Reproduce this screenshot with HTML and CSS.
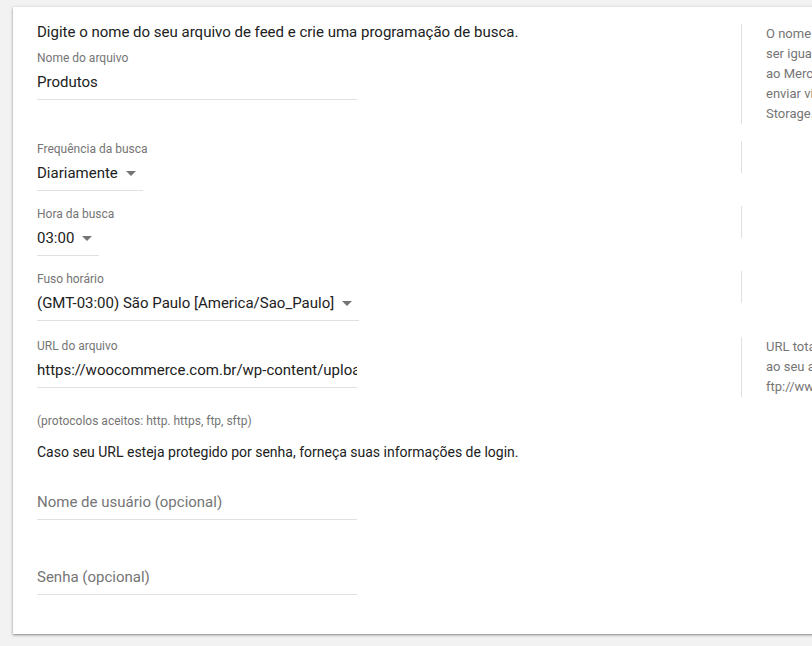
FILE: index.html
```html
<!DOCTYPE html>
<html lang="pt-BR">
<head>
<meta charset="utf-8">
<title>Feed</title>
<link rel="stylesheet" href="styles.css">
</head>
<body>
<div class="card">
  <div class="row">
    <div class="main">
      <p class="heading">Digite o nome do seu arquivo de feed e crie uma programação de busca.</p>
      <div class="field first">
        <div class="label">Nome do arquivo</div>
        <input class="input" type="text" value="Produtos">
      </div>
    </div>
    <div class="help tall">O nome do arquivo precisa<br>ser igual ao nome do arquivo enviado<br>ao Merchant Center, caso pretenda<br>enviar via FTP ou Google Cloud<br>Storage.</div>
  </div>

  <div class="row gap16">
    <div class="main">
      <div class="field">
        <div class="label">Frequência da busca</div>
        <div class="select"><span>Diariamente</span><svg class="arrow" width="10" height="5" viewBox="0 0 10 5"><path d="M0 0h10L5 5z"/></svg></div>
      </div>
    </div>
    <div class="help"></div>
  </div>

  <div class="row gap14">
    <div class="main">
      <div class="field">
        <div class="label">Hora da busca</div>
        <div class="select"><span>03:00</span><svg class="arrow" width="10" height="5" viewBox="0 0 10 5"><path d="M0 0h10L5 5z"/></svg></div>
      </div>
    </div>
    <div class="help"></div>
  </div>

  <div class="row gap14">
    <div class="main">
      <div class="field">
        <div class="label">Fuso horário</div>
        <div class="select"><span>(GMT-03:00) São Paulo [America/Sao_Paulo]</span><svg class="arrow" width="10" height="5" viewBox="0 0 10 5"><path d="M0 0h10L5 5z"/></svg></div>
      </div>
    </div>
    <div class="help"></div>
  </div>

  <div class="row gap16">
    <div class="main">
      <div class="field">
        <div class="label">URL do arquivo</div>
        <input class="input" type="text" value="https://woocommerce.com.br/wp-content/uploads/feed/produtos.xml">
      </div>
    </div>
    <div class="help url">URL total do arquivo, incluindo o caminho<br>ao seu arquivo. Por exemplo:<br>ftp://www.exemplo.com/feed.xml</div>
  </div>

  <p class="note">(protocolos aceitos: http. https, ftp, sftp)</p>
  <p class="text">Caso seu URL esteja protegido por senha, forneça suas informações de login.</p>
  <div class="field first">
    <div class="label"></div>
    <input class="input" type="text" placeholder="Nome de usuário (opcional)">
  </div>
  <div class="field second">
    <div class="label"></div>
    <input class="input" type="password" placeholder="Senha (opcional)">
  </div>
</div>
</body>
</html>
```

FILE: styles.css
```css
html, body {
  margin: 0;
  padding: 0;
}
body {
  background: #f2f2f2;
  font-family: Roboto, "Noto Sans", Arial, sans-serif;
  color: #212121;
  height: 646px;
  overflow: hidden;
}
.card {
  margin: 7px 0 0 13px;
  width: 1100px;
  background: #fff;
  box-shadow: 0 1px 3px rgba(0, 0, 0, 0.35), 0 1px 1px rgba(0, 0, 0, 0.12);
  padding: 15px 0 39px 24px;
  box-sizing: border-box;
}
.row {
  display: flex;
  align-items: flex-start;
}
.gap14 { margin-top: 14px; }
.gap16 { margin-top: 16px; }
.main {
  width: 704px;
  flex: none;
}
.help {
  margin-top: 1px;
  min-height: 32px;
  border-left: 1px solid #e0e0e0;
  padding-left: 24px;
  font-size: 13px;
  line-height: 20px;
  color: #757575;
  white-space: nowrap;
  box-sizing: border-box;
}
.help.tall {
  margin-top: 2px;
}
.help.url {
  margin-top: 0;
}
.heading, .text {
  margin: 0;
  line-height: 20px;
  color: #212121;
}
.heading {
  font-size: 15px;
}
.text {
  font-size: 14px;
  margin-top: 13px;
}
.note {
  margin: 16px 0 0;
  font-size: 12px;
  line-height: 16px;
  color: #757575;
}
.field.first { margin-top: 7px; }
.field.second { margin-top: 24px; }
.label {
  height: 16px;
  font-size: 12px;
  line-height: 18px;
  color: #757575;
}
.input {
  display: block;
  width: 320px;
  height: 24px;
  padding: 5px 0;
  margin: 0;
  border: 0;
  border-bottom: 1px solid #e0e0e0;
  border-radius: 0;
  outline: none;
  background: transparent;
  font-family: Roboto, "Noto Sans", Arial, sans-serif;
  font-size: 15px;
  line-height: 24px;
  color: #212121;
  box-sizing: content-box;
}
.input::placeholder {
  color: #757575;
  opacity: 1;
}
.select {
  display: inline-flex;
  align-items: center;
  height: 24px;
  padding: 5px 7px 5px 0;
  border-bottom: 1px solid #e0e0e0;
  font-size: 15px;
  line-height: 24px;
  color: #212121;
}
.arrow {
  margin-left: 8px;
  fill: #757575;
}
```
